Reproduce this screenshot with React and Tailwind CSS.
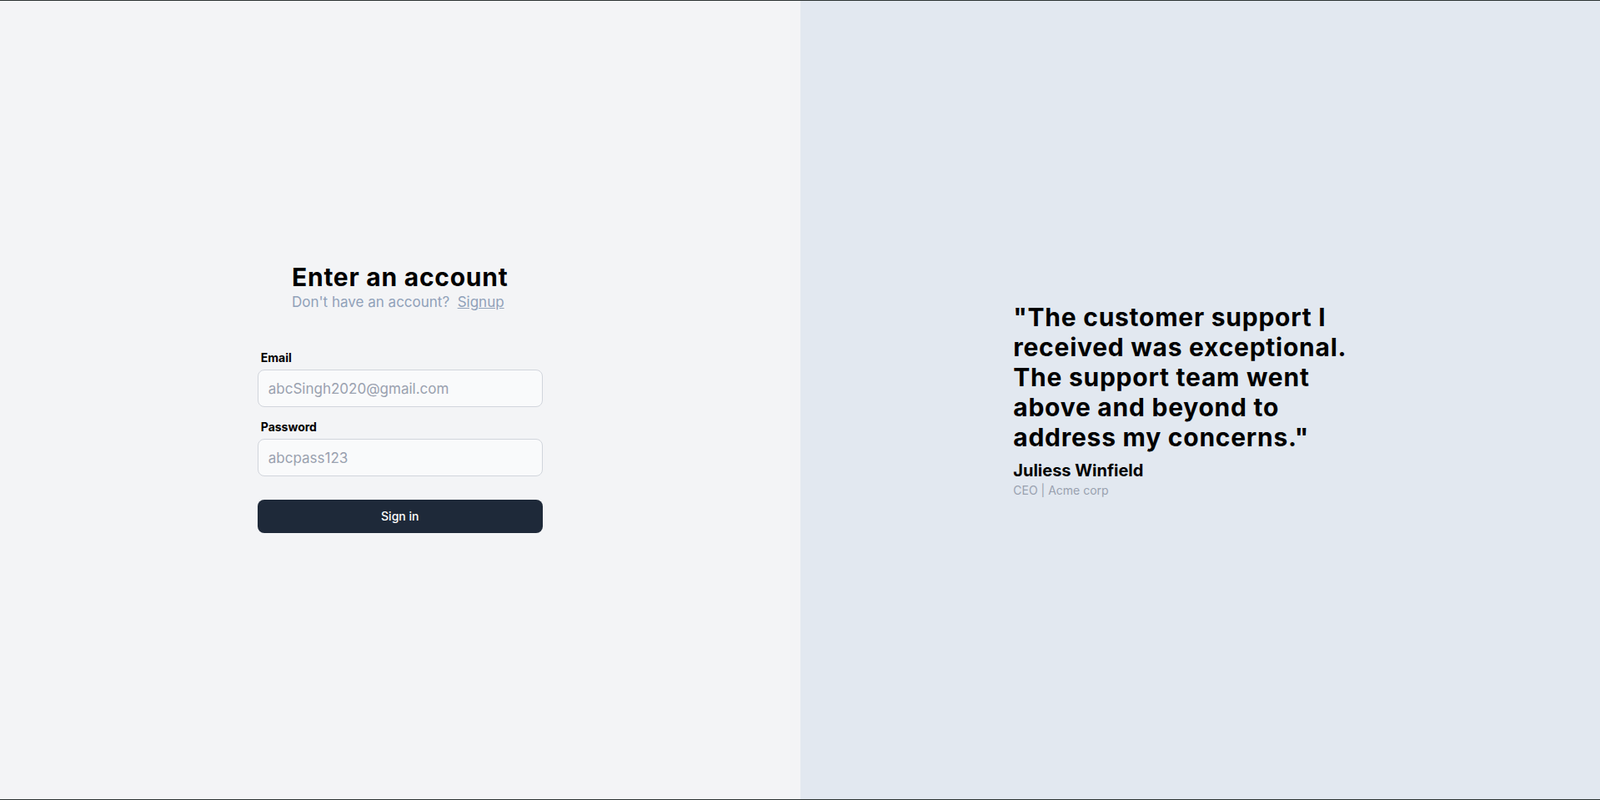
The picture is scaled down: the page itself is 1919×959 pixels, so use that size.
import React, { useState } from "react"

const FONT = { fontFamily: "Inter, 'Open Sans', sans-serif" }

export default function App() {
  const [email, setEmail] = useState("")
  const [password, setPassword] = useState("")

  return (
    <div className="h-[959px] w-full flex border-y border-[#2c3333] overflow-hidden" style={FONT}>
      {/* Sign in form */}
      <div className="w-1/2 bg-gray-100 flex flex-col items-center justify-center pb-1.5">
        <div className="w-[342px]">
          <div className="flex justify-center">
            <div className="w-fit">
              <h1 className="text-3xl font-bold text-black tracking-wide">Enter an account</h1>
              <p className="text-[17px] text-slate-400">
                Don't have an account?&nbsp; <a href="#" className="underline">Signup</a>
              </p>
            </div>
          </div>

          <form className="mt-11" onSubmit={e => e.preventDefault()}>
            <label className="block text-sm font-bold text-black px-1 mb-1">Email</label>
            <input
              type="email"
              value={email}
              onChange={e => setEmail(e.target.value)}
              placeholder="abcSingh2020@gmail.com"
              className="w-full h-[45px] px-3 text-[17px] rounded-lg border border-gray-300 bg-gray-50 placeholder:text-gray-400 outline-none"
            />
            <label className="block text-sm font-bold text-black px-1 mb-1 mt-3.5">Password</label>
            <input
              type="password"
              value={password}
              onChange={e => setPassword(e.target.value)}
              placeholder="abcpass123"
              className="w-full h-[45px] px-3 text-[17px] rounded-lg border border-gray-300 bg-gray-50 placeholder:text-gray-400 outline-none"
            />
            <button
              type="submit"
              className="w-full h-10 mt-7 rounded-lg bg-gray-800 text-white text-sm font-medium"
            >
              Sign in
            </button>
          </form>
        </div>
      </div>

      {/* Testimonial */}
      <div className="w-1/2 bg-slate-200 flex items-center justify-center">
        <div className="w-md">
          <blockquote className="text-3xl font-bold text-black tracking-wide">
            "The customer support I<br />
            received was exceptional.<br />
            The support team went<br />
            above and beyond to<br />
            address my concerns."
          </blockquote>
          <p className="text-xl font-bold text-black mt-2">Juliess Winfield</p>
          <p className="text-sm text-gray-400">CEO | Acme corp</p>
        </div>
      </div>
    </div>
  )
}
